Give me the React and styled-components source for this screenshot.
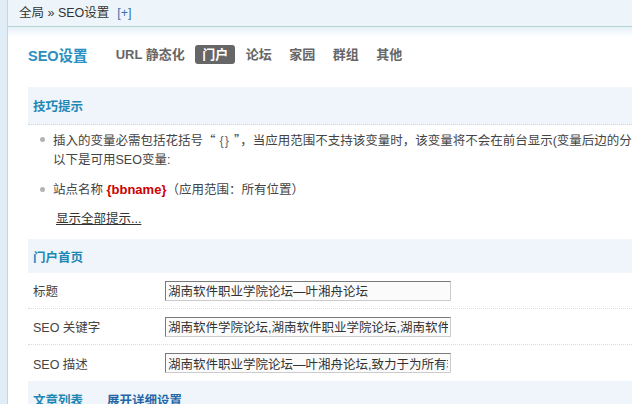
import React from "react";
import styled, { createGlobalStyle } from "styled-components";

const GlobalStyle = createGlobalStyle`
  html, body {
    margin: 0;
    padding: 0;
    background: #fff;
    overflow: hidden;
  }
  body {
    font-family: "Liberation Sans", "Noto Sans CJK SC", sans-serif;
    font-size: 12.5px;
    color: #444;
  }
`;

// Page frame: thin left rail + main column
const Frame = styled.div`
  display: flex;
  width: 632px;
  height: 404px;
  overflow: hidden;
`;

const Rail = styled.div`
  width: 7px;
  flex: none;
  background: #e0ecf6;
  border-right: 1px solid #c5d6e0;
`;

const Main = styled.div`
  flex: 1;
  min-width: 0;
  display: flex;
  flex-direction: column;
`;

// Breadcrumb bar
const TopBar = styled.div`
  height: 26px;
  line-height: 26px;
  padding-left: 11px;
  background: #eef5fa;
  border-bottom: 1px solid #b5d5d0;
  color: #333;
  white-space: nowrap;

  span {
    color: #3a6fb0;
    margin-left: 8px;
  }
`;

const Content = styled.div`
  flex: 1;
  padding-left: 20px;
  background: linear-gradient(#e6f0f9, #fff 10px) no-repeat;
  overflow: hidden;
`;

// Title with tabs
const TitleRow = styled.div`
  display: flex;
  align-items: center;
  padding: 17px 0 22px;
  white-space: nowrap;
`;

const Title = styled.h3`
  margin: 0 21px 0 0;
  font-size: 14.5px;
  font-weight: bold;
  color: #2a8fc0;
`;

const Tab = styled.a`
  display: block;
  height: 19px;
  line-height: 19px;
  padding: 0 7px;
  margin-right: 3.5px;
  border-radius: 3px;
  font-size: 13px;
  font-weight: bold;
  color: ${({ $active }) => ($active ? "#fff" : "#666")};
  background: ${({ $active }) => ($active ? "#666" : "transparent")};
`;

const Panel = styled.div`
  width: 760px;
`;

const SectionHead = styled.div`
  display: flex;
  gap: 24px;
  height: ${({ $h }) => $h || 34}px;
  align-items: center;
  padding-left: 5px;
  background: #eff5fb;
  border-bottom: ${({ $line }) => ($line ? "1px dotted #ccd6df" : "none")};
  font-weight: bold;
  color: #1f87b5;
  white-space: nowrap;
`;

const HeadLink = styled.span`
  color: #2467a8;
`;

const Tips = styled.ul`
  list-style: none;
  margin: 0;
  padding: 5px 0 10px 12px;
  line-height: 19px;
`;

const Tip = styled.li`
  position: relative;
  padding-left: 13px;
  margin-bottom: 10px;
  white-space: ${({ $wrap }) => ($wrap ? "normal" : "nowrap")};

  &::before {
    content: "";
    position: absolute;
    left: 0;
    top: 7px;
    width: 5px;
    height: 5px;
    border-radius: 50%;
    background: #b4b4b4;
  }
`;

// full-width curly quotes
const Quote = styled.span`
  font-family: "Noto Sans CJK SC", sans-serif;
  font-feature-settings: "fwid";
`;

const Braces = styled.span`
  margin: 0 4px;
  letter-spacing: 1px;
  color: #666;
`;

const Var = styled.b`
  color: #c00;
  font-size: 13px;
`;

const More = styled.a`
  display: block;
  padding-left: 16px;
  color: #333;
  text-decoration: underline;
`;

const Row = styled.div`
  display: flex;
  align-items: center;
  height: 36px;
  border-bottom: ${({ $last }) => ($last ? "none" : "1px dotted #d6dce2")};
  box-sizing: border-box;
`;

const Label = styled.div`
  width: 132px;
  padding-left: 5px;
  color: #444;
  flex: none;
`;

const Field = styled.input`
  width: 286px;
  height: 20px;
  box-sizing: border-box;
  padding: 0 2px;
  border: 1px solid;
  border-color: #7a7a7a #ccc #ccc #7a7a7a;
  background: #fbfbfb;
  font: inherit;
  color: #333;
  outline: none;
`;

const rows = [
  { label: "标题", value: "湖南软件职业学院论坛—叶湘舟论坛" },
  {
    label: "SEO 关键字",
    value: "湖南软件学院论坛,湖南软件职业学院论坛,湖南软件学院,叶湘舟论坛",
  },
  {
    label: "SEO 描述",
    value: "湖南软件职业学院论坛—叶湘舟论坛,致力于为所有软件学院学生提供交流平台",
  },
];

const tabs = ["URL 静态化", "门户", "论坛", "家园", "群组", "其他"];

export default function App() {
  return (
    <>
      <GlobalStyle />
      <Frame>
        <Rail />
        <Main>
          <TopBar>
            全局 » SEO设置<span>[+]</span>
          </TopBar>
          <Content>
            <TitleRow>
              <Title>SEO设置</Title>
              {tabs.map((t) => (
                <Tab key={t} $active={t === "门户"}>
                  {t}
                </Tab>
              ))}
            </TitleRow>

            <Panel>
              <SectionHead $h={37} $line>
                技巧提示
              </SectionHead>
              <Tips>
                <Tip $wrap>
                  插入的变量必需包括花括号<Quote>“</Quote>
                  <Braces>{"{}"}</Braces>
                  <Quote>”</Quote>，当应用范围不支持该变量时，该变量将不会在前台显示(变量后边的分隔符也不会显示)，
                  <br />
                  以下是可用SEO变量:
                </Tip>
                <Tip>
                  站点名称 <Var>{"{bbname}"}</Var>（应用范围：所有位置）
                </Tip>
                <More>显示全部提示...</More>
              </Tips>

              <SectionHead>门户首页</SectionHead>
              {rows.map((r, i) => (
                <Row key={r.label} $last={i === rows.length - 1}>
                  <Label>{r.label}</Label>
                  <Field readOnly value={r.value} />
                </Row>
              ))}

              <SectionHead $h={36}>
                文章列表
                <HeadLink>展开详细设置</HeadLink>
              </SectionHead>
            </Panel>
          </Content>
        </Main>
      </Frame>
    </>
  );
}
